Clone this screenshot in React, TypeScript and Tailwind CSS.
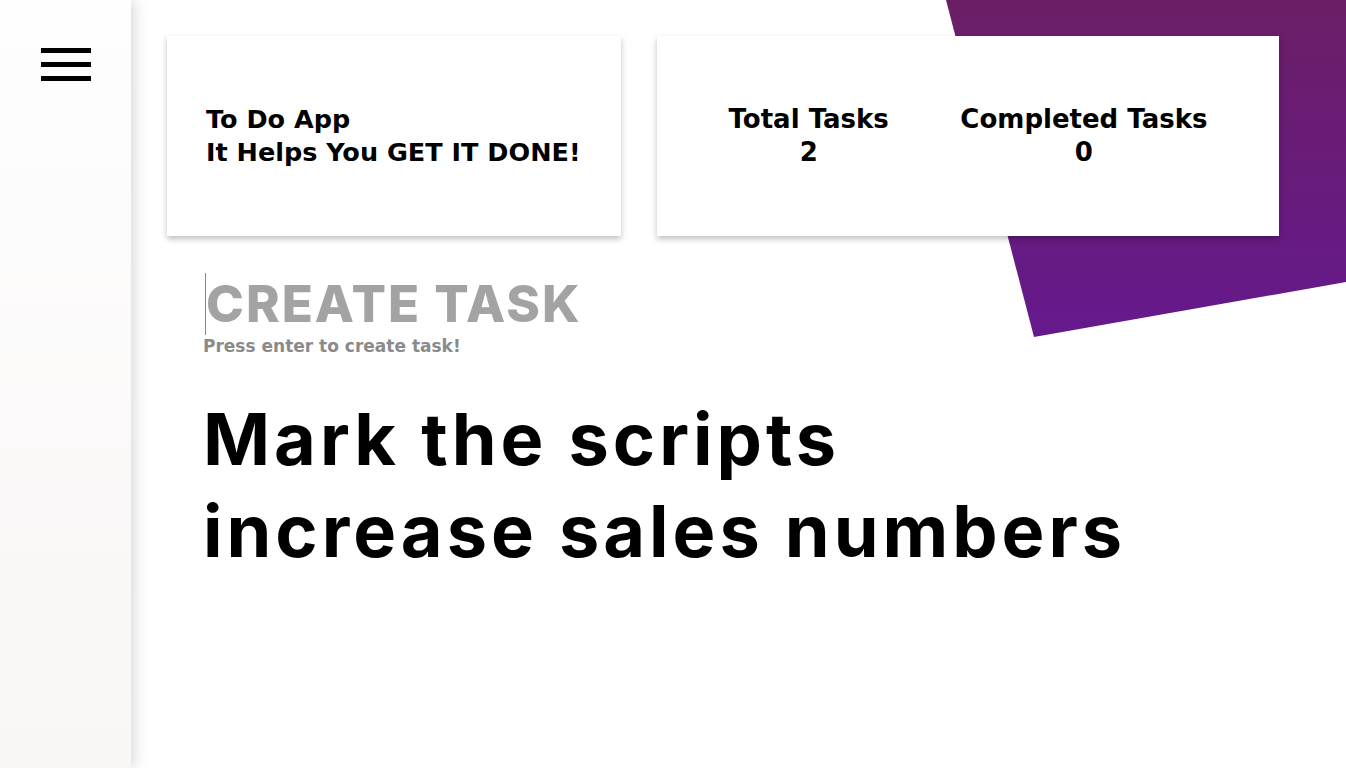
import { useState } from 'react';

const font = { fontFamily: 'Inter, "DejaVu Sans", sans-serif' };
const heavy = { fontFamily: '"DejaVu Sans", Inter, sans-serif' };

export default function App() {
  const [task, setTask] = useState('');
  const [tasks, setTasks] = useState<string[]>(['Mark the scripts', 'increase sales numbers']);

  return (
    <div className="relative flex h-[768px] w-full overflow-hidden bg-white" style={font}>
      {/* purple decoration */}
      <svg
        className="pointer-events-none absolute left-[946px] top-0"
        width="400"
        height="337"
        viewBox="0 0 400 337"
      >
        <defs>
          <linearGradient id="purple" x1="0" y1="0" x2="0" y2="1">
            <stop offset="0" stopColor="#6b1e66" />
            <stop offset="1" stopColor="#65198d" />
          </linearGradient>
        </defs>
        <polygon points="0,0 400,0 400,282 88,337" fill="url(#purple)" />
      </svg>

      {/* Sidebar */}
      <aside className="relative z-10 w-[131px] shrink-0 bg-gradient-to-b from-[#fefefe] to-[#f9f6f5] shadow-[3px_0_14px_rgba(0,0,0,0.16)]">
        <button className="ml-[41px] mt-[48px] flex flex-col gap-[9px]" aria-label="Menu">
          <span className="block h-[5px] w-[50px] bg-black" />
          <span className="block h-[5px] w-[50px] bg-black" />
          <span className="block h-[5px] w-[50px] bg-black" />
        </button>
      </aside>

      {/* Main */}
      <main className="relative flex-1 pl-[36px] pt-[36px]">
        <div className="flex gap-[36px]" style={heavy}>
          <div className="flex h-[200px] w-[454px] flex-col justify-center bg-white pl-[39px] text-[25.5px] font-bold leading-[33px] text-black shadow-[0_3px_6px_rgba(0,0,0,0.25)]">
            <p>To Do App</p>
            <p>It Helps You GET IT DONE!</p>
          </div>
          <div className="flex h-[200px] w-[622px] items-center justify-evenly bg-white text-[26px] font-bold leading-[33px] text-black shadow-[0_3px_6px_rgba(0,0,0,0.25)]">
            <div className="text-center">
              <p>Total Tasks</p>
              <p>{tasks.length}</p>
            </div>
            <div className="text-center">
              <p>Completed Tasks</p>
              <p>0</p>
            </div>
          </div>
        </div>

        <div className="pl-[38px] pt-[37px]">
          <form
            onSubmit={(e) => {
              e.preventDefault();
              if (task.trim()) setTasks([...tasks, task.trim()]);
              setTask('');
            }}
          >
            <input
              value={task}
              onChange={(e) => setTask(e.target.value)}
              placeholder="CREATE TASK"
              className="h-[62px] w-[600px] border-l border-[#888] bg-transparent text-[51px] font-extrabold tracking-[2px] text-black outline-none placeholder:text-[#a3a3a3]"
            />
          </form>
          <p className="-ml-[2px] text-[17px] font-bold leading-[22px] text-[#8a8a8a]" style={heavy}>
            Press enter to create task!
          </p>
          <div className="-ml-[2px] mt-[36px]">
            {tasks.map((t, i) => (
              <p key={i} className="text-[72px] font-bold leading-[92px] tracking-[4px] text-black">
                {t}
              </p>
            ))}
          </div>
        </div>
      </main>
    </div>
  );
}
